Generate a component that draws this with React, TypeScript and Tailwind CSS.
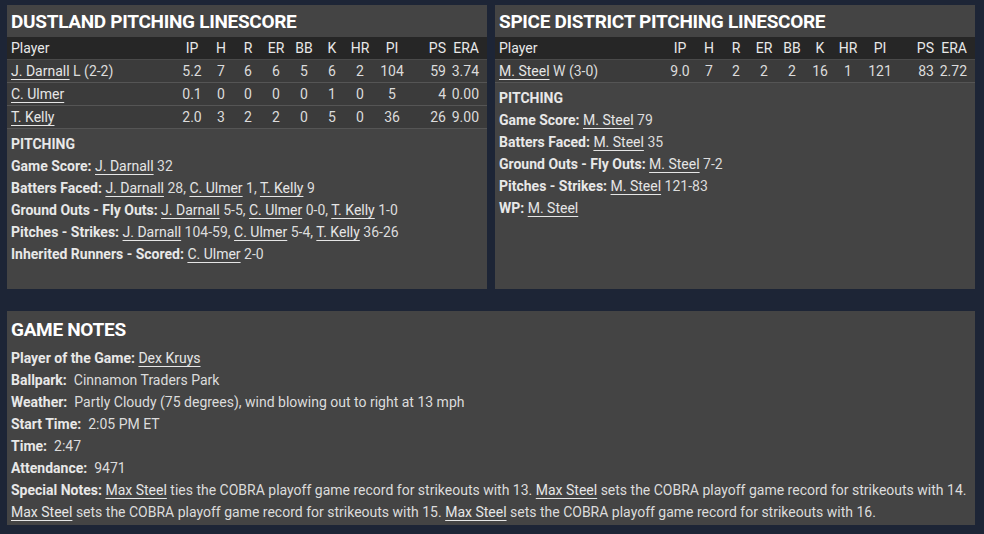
import React from "react";

type Row = { name: string; dec?: string; stats: string[] };

const cols = ["IP", "H", "R", "ER", "BB", "K", "HR", "PI", "PS", "ERA"];

const dustland: Row[] = [
  { name: "J. Darnall", dec: "L (2-2)", stats: ["5.2", "7", "6", "6", "5", "6", "2", "104", "59", "3.74"] },
  { name: "C. Ulmer", stats: ["0.1", "0", "0", "0", "0", "1", "0", "5", "4", "0.00"] },
  { name: "T. Kelly", stats: ["2.0", "3", "2", "2", "0", "5", "0", "36", "26", "9.00"] },
];

const spice: Row[] = [
  { name: "M. Steel", dec: "W (3-0)", stats: ["9.0", "7", "2", "2", "2", "16", "1", "121", "83", "2.72"] },
];

// [value, isLink]
type Part = [string, boolean];

const dustNotes: { label: string; parts: Part[] }[] = [
  { label: "Game Score:", parts: [["J. Darnall", true], [" 32", false]] },
  {
    label: "Batters Faced:",
    parts: [["J. Darnall", true], [" 28, ", false], ["C. Ulmer", true], [" 1, ", false], ["T. Kelly", true], [" 9", false]],
  },
  {
    label: "Ground Outs - Fly Outs:",
    parts: [["J. Darnall", true], [" 5-5, ", false], ["C. Ulmer", true], [" 0-0, ", false], ["T. Kelly", true], [" 1-0", false]],
  },
  {
    label: "Pitches - Strikes:",
    parts: [["J. Darnall", true], [" 104-59, ", false], ["C. Ulmer", true], [" 5-4, ", false], ["T. Kelly", true], [" 36-26", false]],
  },
  { label: "Inherited Runners - Scored:", parts: [["C. Ulmer", true], [" 2-0", false]] },
];

const spiceNotes: { label: string; parts: Part[] }[] = [
  { label: "Game Score:", parts: [["M. Steel", true], [" 79", false]] },
  { label: "Batters Faced:", parts: [["M. Steel", true], [" 35", false]] },
  { label: "Ground Outs - Fly Outs:", parts: [["M. Steel", true], [" 7-2", false]] },
  { label: "Pitches - Strikes:", parts: [["M. Steel", true], [" 121-83", false]] },
  { label: "WP:", parts: [["M. Steel", true]] },
];

const colClass = [
  "w-[32px] text-center",
  "w-[26px] text-center",
  "w-[28px] text-center",
  "w-[28px] text-center",
  "w-[28px] text-center",
  "w-[28px] text-center",
  "w-[28px] text-center",
  "w-[36px] text-center",
  "w-[36px] text-right",
  "w-[33px] text-right",
];

function Link({ children }: { children: React.ReactNode }) {
  return <span className="underline underline-offset-[3px] decoration-1 text-[#e6e6e6]">{children}</span>;
}

function Parts({ parts }: { parts: Part[] }) {
  return (
    <>
      {parts.map(([t, link], i) =>
        link ? <Link key={i}>{t}</Link> : <span key={i} className="whitespace-pre">{t}</span>
      )}
    </>
  );
}

function Linescore({ title, rows, notes }: { title: string; rows: Row[]; notes: { label: string; parts: Part[] }[] }) {
  return (
    <div className="w-[480px] h-[284px] bg-[#444444] text-[#dcdcdc]">
      <div className="h-[32px] px-[4px] pt-[2px] flex items-center text-[19px] font-bold text-white tracking-[-0.3px]">
        {title}
      </div>
      <div className="h-[23px] pt-[1px] bg-[#262626] flex items-center pl-[4px] pr-[8px] border-b border-[#4a4a4a] text-[#e8e8e8]">
        <div className="flex-1">Player</div>
        {cols.map((c, i) => (
          <div key={c} className={colClass[i]}>
            {c}
          </div>
        ))}
      </div>
      {rows.map((r) => (
        <div key={r.name} className="h-[23px] pt-[1px] bg-[#3b3b3b] flex items-center pl-[4px] pr-[8px] border-b border-[#555555]">
          <div className="flex-1">
            <Link>{r.name}</Link>
            {r.dec && <span> {r.dec}</span>}
          </div>
          {r.stats.map((s, i) => (
            <div key={i} className={colClass[i]}>
              {s}
            </div>
          ))}
        </div>
      ))}
      <div className="px-[4px] pt-[4px] leading-[22px]">
        <div className="font-bold text-[#e8e8e8]">PITCHING</div>
        {notes.map((n) => (
          <div key={n.label}>
            <span className="font-bold text-[#e8e8e8]">{n.label}</span>
            <span> </span>
            <Parts parts={n.parts} />
          </div>
        ))}
      </div>
    </div>
  );
}

export default function App() {
  const ms = (t: string) => <Link>{t}</Link>;
  return (
    <div
      className="w-[984px] h-[534px] bg-[#1d2536] pt-[5px] px-[7px] text-[14px] overflow-hidden"
      style={{ fontFamily: 'Roboto, "Noto Sans", sans-serif' }}
    >
      <div className="flex gap-[8px]">
        <Linescore title="DUSTLAND PITCHING LINESCORE" rows={dustland} notes={dustNotes} />
        <Linescore title="SPICE DISTRICT PITCHING LINESCORE" rows={spice} notes={spiceNotes} />
      </div>
      <div className="mt-[22px] w-[968px] h-[214px] bg-[#444444] text-[#dcdcdc] px-[4px] leading-[22px]">
        <div className="h-[36px] pt-[1px] flex items-center text-[19px] font-bold text-white tracking-[-0.3px]">
          GAME NOTES
        </div>
        <div>
          <span className="font-bold text-[#e8e8e8]">Player of the Game:</span> {ms("Dex Kruys")}
        </div>
        <div>
          <span className="font-bold text-[#e8e8e8]">Ballpark:</span>
          <span className="ml-[7px]">Cinnamon Traders Park</span>
        </div>
        <div>
          <span className="font-bold text-[#e8e8e8]">Weather:</span>
          <span className="ml-[7px]">Partly Cloudy (75 degrees), wind blowing out to right at 13 mph</span>
        </div>
        <div>
          <span className="font-bold text-[#e8e8e8]">Start Time:</span>
          <span className="ml-[7px]">2:05 PM ET</span>
        </div>
        <div>
          <span className="font-bold text-[#e8e8e8]">Time:</span>
          <span className="ml-[7px]">2:47</span>
        </div>
        <div>
          <span className="font-bold text-[#e8e8e8]">Attendance:</span>
          <span className="ml-[7px]">9471</span>
        </div>
        <div>
          <span className="font-bold text-[#e8e8e8]">Special Notes:</span> {ms("Max Steel")} ties the COBRA playoff
          game record for strikeouts with 13. {ms("Max Steel")} sets the COBRA playoff game record for strikeouts with
          14. {ms("Max Steel")} sets the COBRA playoff game record for strikeouts with 15. {ms("Max Steel")} sets the
          COBRA playoff game record for strikeouts with 16.
        </div>
      </div>
    </div>
  );
}
